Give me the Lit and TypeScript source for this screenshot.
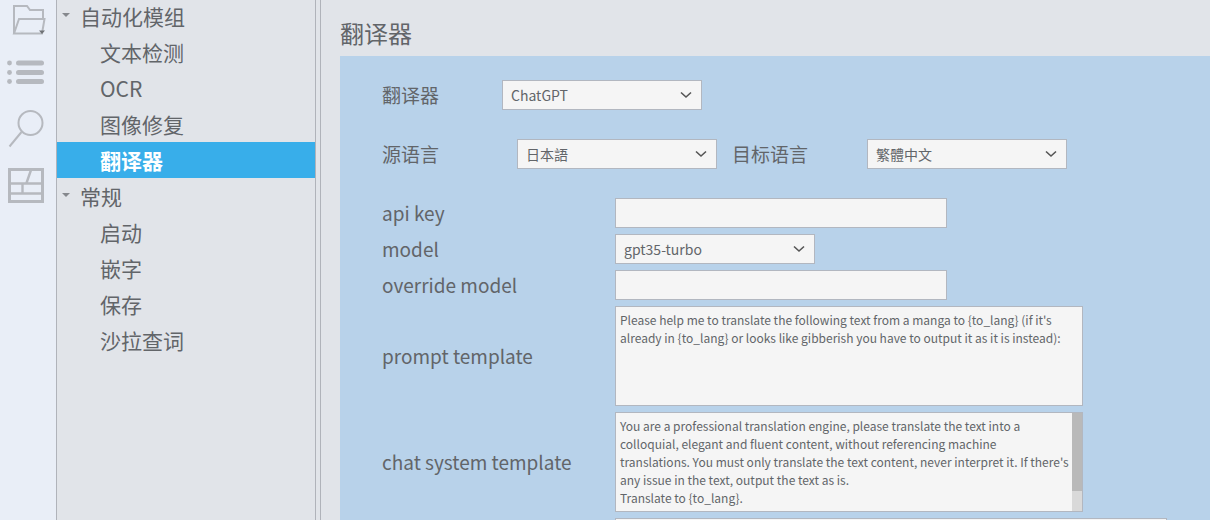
import { LitElement, html, css, svg } from "lit";
import { customElement } from "lit/decorators.js";

const chevron = html`<svg class="chev" width="12" height="8" viewBox="0 0 12 8"><path d="M1 1.5 L6 6 L11 1.5" fill="none" stroke="#555" stroke-width="1.6"/></svg>`;

@customElement("app-root")
export class AppRoot extends LitElement {
  static styles = css`
    :host { display: block; width: 1210px; height: 520px; overflow: hidden; font-family: "Noto Sans CJK SC", "Noto Sans", sans-serif; color: #626569; background: #e1e4e9; }
    .app { display: flex; height: 520px; }
    .rail { width: 56px; flex: none; background: #e9eef7; display: flex; flex-direction: column; align-items: flex-start; }
    .rail svg { display: block; }
    .tree { width: 258px; flex: none; border-left: 1px solid #b0b3ba; border-right: 1px solid #b0b3ba; background: #e1e4e9; margin-right: 4px; }
    .rows { margin-top: -2px; }
    .row { height: 36px; display: flex; align-items: center; font-size: 21px; line-height: 36px; padding-left: 43px; }
    .row.top { padding-left: 6px; gap: 10px; }
    .row.sel { background: #38aeea; color: #fff; font-weight: 700; }
    .caret { width: 0; height: 0; border-left: 4px solid transparent; border-right: 4px solid transparent; border-top: 4px solid #85888d; margin-bottom: 3px; margin-left: -1px; }
    .main { flex: 1; min-width: 0; border-left: 1px solid #b0b3ba; padding-left: 19px; display: flex; flex-direction: column; }
    h1 { margin: 0; height: 56px; font-size: 24px; font-weight: 400; line-height: 65px; }
    .panel { flex: 1; background: #b8d2ea; padding: 24px 0 0 42px; }
    .line { display: flex; align-items: center; font-size: 19px; line-height: 30px; }
    .r1 { height: 29px; }
    .r2 { height: 29px; margin-top: 30px; }
    .l1 { width: 120px; }
    .l2 { width: 135px; }
    .l3 { margin-left: 15px; width: 135px; }
    .combo { box-sizing: border-box; width: 200px; height: 30px; flex: none; border: 1px solid #b2b7c0; background: #f5f5f5; display: flex; align-items: center; justify-content: space-between; padding: 0 9px 0 8px; font-size: 14px; }
    .form { display: grid; grid-template-columns: 233px 1fr; row-gap: 6px; margin-top: 30px; align-items: center; }
    .form label { font-size: 19px; padding-bottom: 2px; }
    .input { box-sizing: border-box; width: 332px; height: 30px; border: 1px solid #b2b7c0; background: #f5f5f5; }
    .text { box-sizing: border-box; width: 468px; height: 100px; border: 1px solid #b2b7c0; background: #f5f5f5; font-size: 12px; line-height: 18px; padding: 4px 4px; display: flex; overflow: hidden; }
    .text .body { flex: 1; }
    .text.scroll { padding-right: 0; padding-top: 4px; padding-bottom: 0; }
    .text.scroll .body { white-space: pre; }
    .sb { width: 10px; flex: none; margin-top: -4px; background: #d9d9d9; display: flex; height: 98px; }
    .sb i { display: block; width: 10px; height: 78px; background: #b9b9b9; }
    .last { width: 552px; height: 30px; }
  `;

  render() {
    const sys = [
      "You are a professional translation engine, please translate the text into a",
      "colloquial, elegant and fluent content, without referencing machine",
      "translations. You must only translate the text content, never interpret it. If there's",
      "any issue in the text, output the text as is.",
      "Translate to {to_lang}.",
    ].join("\n");
    return html`<div class="app">
      <div class="rail">
        <svg width="56" height="220" viewBox="0 0 56 220" fill="none" stroke="#b6b9bf">
          ${svg`<path d="M14 33.5V6H27L30 10H43V19" stroke-width="2"/>
          <path d="M14 33.5L19 19H44.5L42 33.5Z" stroke-width="2"/>
          <path d="M39 30.5H45L42 34Z" fill="#6f7276" stroke="none"/>
          <g fill="#b6b9bf" stroke="none">
            <circle cx="9.5" cy="63" r="2.4"/><circle cx="9.5" cy="72.5" r="2.4"/><circle cx="9.5" cy="81.5" r="2.4"/>
            <rect x="16" y="60.5" width="28" height="5" rx="2.5"/><rect x="16" y="70" width="28" height="5" rx="2.5"/><rect x="16" y="79" width="28" height="5" rx="2.5"/>
          </g>
          <circle cx="30.5" cy="123" r="12" stroke-width="2"/>
          <path d="M21.5 132L9.5 146.5" stroke-width="2"/>
          <rect x="9.5" y="169.5" width="33" height="32" stroke-width="3"/>
          <path d="M9 183.5H43M9 193.5H43M22.5 184V193M31 170L26.5 183" stroke-width="2.4"/>`}
        </svg>
      </div>
      <div class="tree"><div class="rows">
        <div class="row top"><span class="caret"></span>自动化模组</div>
        <div class="row">文本检测</div>
        <div class="row">OCR</div>
        <div class="row">图像修复</div>
        <div class="row sel">翻译器</div>
        <div class="row top"><span class="caret"></span>常规</div>
        <div class="row">启动</div>
        <div class="row">嵌字</div>
        <div class="row">保存</div>
        <div class="row">沙拉查词</div>
      </div></div>
      <div class="main">
        <h1>翻译器</h1>
        <div class="panel">
          <div class="line r1"><span class="l1">翻译器</span><div class="combo"><span>ChatGPT</span>${chevron}</div></div>
          <div class="line r2"><span class="l2">源语言</span><div class="combo"><span>日本語</span>${chevron}</div><span class="l3">目标语言</span><div class="combo"><span>繁體中文</span>${chevron}</div></div>
          <div class="form">
            <label>api key</label><div class="input"></div>
            <label>model</label><div class="combo"><span>gpt35-turbo</span>${chevron}</div>
            <label>override model</label><div class="input"></div>
            <label>prompt template</label><div class="text"><div class="body">Please help me to translate the following text from a manga to {to_lang} (if it's already in {to_lang} or looks like gibberish you have to output it as it is instead):</div></div>
            <label>chat system template</label><div class="text scroll"><div class="body">${sys}</div><div class="sb"><i></i></div></div>
            <span></span><div class="input last"></div>
          </div>
        </div>
      </div>
    </div>`;
  }
}
